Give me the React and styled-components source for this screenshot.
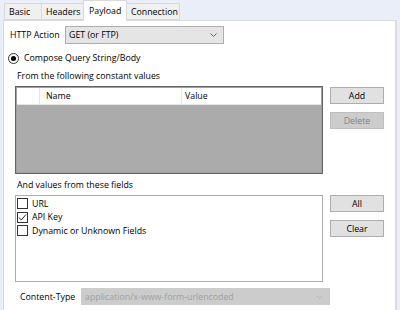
import styled, { createGlobalStyle } from 'styled-components';

const GlobalStyle = createGlobalStyle`
  html, body { margin: 0; padding: 0; }
  body {
    width: 400px;
    height: 310px;
    overflow: hidden;
    background: #e9eef8;
    font-family: "Open Sans", "Noto Sans", sans-serif;
    font-size: 8.8px;
    line-height: 14px;
    color: #000;
  }
`;

const Window = styled.div`
  width: 400px;
  height: 310px;
  display: flex;
  flex-direction: column;
  padding: 0 3px 0 3px;
  box-sizing: border-box;
`;

const TabStrip = styled.div`
  display: flex;
  align-items: flex-end;
  height: 20px;
  padding-left: 1px;
  position: relative;
  z-index: 1;
`;

const Tab = styled.div`
  width: ${(p) => p.width};
  height: ${(p) => (p.active ? '21px' : '17px')};
  box-sizing: border-box;
  padding: 0 0 0 ${(p) => (p.active ? '5px' : '4px')};
  display: flex;
  align-items: center;
  background: ${(p) => (p.active ? '#fff' : '#f0f0f0')};
  border: 1px solid #d9d9d9;
  border-bottom: ${(p) => (p.active ? '1px solid #fff' : '1px solid #d9d9d9')};
  margin-bottom: ${(p) => (p.active ? '-1px' : '0')};
  margin-left: -1px;
  position: relative;
  z-index: ${(p) => (p.active ? 2 : 1)};
  &:first-child { margin-left: 0; }
`;

const Panel = styled.div`
  flex: 1;
  background: #fff;
  border: 1px solid #d9d9d9;
  border-right: 2px solid #dcdcdc;
  border-bottom: none;
  padding: 5px 0 0 4px;
  display: flex;
  flex-direction: column;
`;

const Row = styled.div`
  display: flex;
  align-items: center;
  gap: ${(p) => p.gap || '0'};
  padding-left: ${(p) => p.indent || '0'};
  margin-top: ${(p) => p.top || '0'};
`;

const Label = styled.span`
  white-space: nowrap;
  flex-shrink: 0;
  width: ${(p) => p.width || 'auto'};
`;

const Select = styled.div`
  width: ${(p) => p.width};
  height: ${(p) => p.height || '18px'};
  flex-shrink: 0;
  box-sizing: border-box;
  border: 1px solid ${(p) => (p.disabled ? '#cccccc' : '#adadad')};
  background: ${(p) => (p.disabled ? '#cccccc' : '#e5e5e5')};
  color: ${(p) => (p.disabled ? '#a0a0a0' : '#000')};
  display: flex;
  align-items: center;
  justify-content: space-between;
  padding: 0 6px 0 3px;
`;

const Chevron = ({ color }) => (
  <svg width="7" height="4" viewBox="0 0 7 4">
    <path d="M0.5 0.5 L3.5 3.5 L6.5 0.5" fill="none" stroke={color} strokeWidth="1" />
  </svg>
);

const Radio = styled.span`
  width: 11px;
  height: 11px;
  box-sizing: border-box;
  border-radius: 50%;
  border: 1px solid #333;
  display: flex;
  align-items: center;
  justify-content: center;
  &::after {
    content: '';
    width: 5px;
    height: 5px;
    border-radius: 50%;
    background: #000;
  }
`;

const Section = styled.div`
  display: flex;
  gap: 7px;
  margin-top: ${(p) => p.top || '0'};
  padding-left: 7px;
`;

const Caption = styled.div`
  padding-left: 9px;
  margin-top: ${(p) => p.top || '0'};
`;

const Grid = styled.div`
  width: 308px;
  height: 88px;
  box-sizing: border-box;
  border: 1px solid #646464;
  box-shadow: inset 0 0 0 1px #a0a0a0;
  background: #ababab;
  display: flex;
  flex-direction: column;
`;

const GridHeader = styled.div`
  display: grid;
  grid-template-columns: 23px 142px 1fr;
  height: 16px;
  background: #fff;
  margin: 1px 1px 0 1px;
  border-bottom: 1px solid #e5e5e5;
`;

const HeadCell = styled.div`
  border-right: ${(p) => (p.last ? 'none' : '1px solid #e5e5e5')};
  padding-left: ${(p) => p.pad || '0'};
  display: flex;
  align-items: center;
`;

const List = styled.div`
  width: 308px;
  height: 87px;
  box-sizing: border-box;
  border: 1px solid #adadad;
  background: #fff;
  padding: 1px 0 0 1px;
  display: flex;
  flex-direction: column;
`;

const Item = styled.label`
  display: flex;
  align-items: center;
  gap: 4px;
  height: 13.5px;
`;

const Box = styled.span`
  width: 11px;
  height: 11px;
  box-sizing: border-box;
  border: 1px solid #333;
  display: flex;
  align-items: center;
  justify-content: center;
`;

const Buttons = styled.div`
  display: flex;
  flex-direction: column;
  gap: 8px;
  padding-top: ${(p) => p.top || '0'};
`;

const Button = styled.div`
  width: 54px;
  height: 17px;
  box-sizing: border-box;
  border: 1px solid ${(p) => (p.disabled ? '#bfbfbf' : '#adadad')};
  background: ${(p) => (p.disabled ? '#cccccc' : '#e1e1e1')};
  color: ${(p) => (p.disabled ? '#838383' : '#000')};
  display: flex;
  align-items: center;
  justify-content: center;
`;

const Check = () => (
  <svg width="9" height="9" viewBox="0 0 9 9">
    <path d="M1 4.5 L3.3 7 L8 1.5" fill="none" stroke="#222" strokeWidth="1" />
  </svg>
);

export default function App() {
  return (
    <>
      <GlobalStyle />
      <Window>
        <TabStrip>
          <Tab width="38px">Basic</Tab>
          <Tab width="43px">Headers</Tab>
          <Tab width="44px" active>Payload</Tab>
          <Tab width="54px">Connection</Tab>
        </TabStrip>
        <Panel>
          <Row indent="2px">
            <Label width="55px">HTTP Action</Label>
            <Select width="159px">
              <span>GET (or FTP)</span>
              <Chevron color="#666" />
            </Select>
          </Row>
          <Row top="7px" gap="5px">
            <Radio />
            <Label>Compose Query String/Body</Label>
          </Row>
          <Caption top="4px">From the following constant values</Caption>
          <Section top="3px">
            <Grid>
              <GridHeader>
                <HeadCell />
                <HeadCell pad="6px">Name</HeadCell>
                <HeadCell pad="3px" last>Value</HeadCell>
              </GridHeader>
            </Grid>
            <Buttons top="1px">
              <Button>Add</Button>
              <Button disabled>Delete</Button>
            </Buttons>
          </Section>
          <Caption top="4px">And values from these fields</Caption>
          <Section top="3px">
            <List>
              <Item><Box />URL</Item>
              <Item><Box><Check /></Box>API Key</Item>
              <Item><Box />Dynamic or Unknown Fields</Item>
            </List>
            <Buttons>
              <Button>All</Button>
              <Button>Clear</Button>
            </Buttons>
          </Section>
          <Row indent="12px" top="6px">
            <Label width="61px">Content-Type</Label>
            <Select width="249px" height="17px" disabled>
              <span>application/x-www-form-urlencoded</span>
              <Chevron color="#b8b8b8" />
            </Select>
          </Row>
        </Panel>
      </Window>
    </>
  );
}
